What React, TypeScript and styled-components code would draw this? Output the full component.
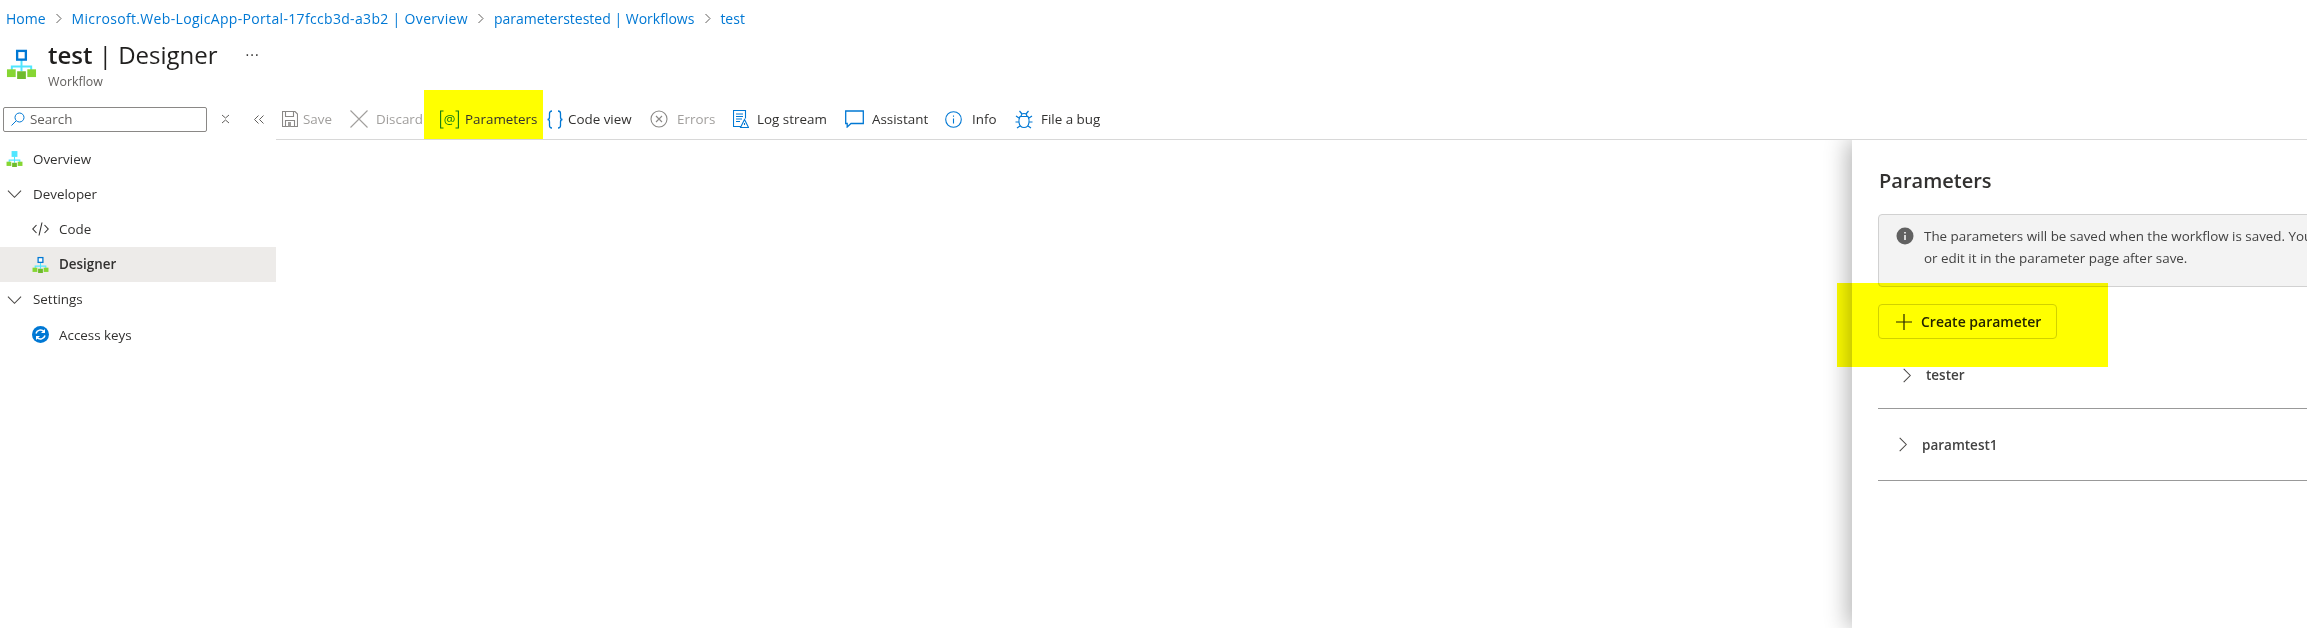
import React from "react";
import styled, { createGlobalStyle } from "styled-components";

const GlobalStyle = createGlobalStyle`
    html, body {
        margin: 0;
        background: #fff;
        overflow: hidden;
    }
    body {
        font-family: "Open Sans", "Noto Sans", sans-serif;
        font-size: 13.4px;
        color: #323130;
    }
`;

const Page = styled.div`
    position: relative;
    width: 2307px;
    height: 628px;
    overflow: hidden;
`;

/* Breadcrumb */
const Breadcrumb = styled.nav`
    display: flex;
    align-items: center;
    height: 38px;
    padding: 0 0 1px 6px;
    box-sizing: border-box;
    color: #0078d4;
    font-size: 14px;
`;
const Crumb = styled.span<{ $spread?: boolean }>`
    letter-spacing: ${({ $spread }) => ($spread ? "0.33px" : "0")};
`;
const CrumbSep = styled.span`
    display: inline-flex;
    width: 26px;
    justify-content: center;
    color: #605e5c;
`;

/* Title */
const Header = styled.header`
    display: flex;
    height: 52px;
    padding-left: 6px;
    box-sizing: border-box;
`;
const HeaderIcon = styled.div`
    margin-top: 10px;
`;
const TitleBlock = styled.div`
    margin-left: 11px;
`;
const TitleRow = styled.div`
    display: flex;
    align-items: center;
    height: 32px;
`;
const Title = styled.h1`
    margin: 0;
    font-size: 24px;
    font-weight: 400;
    color: #201f1e;
    b {
        font-weight: 600;
    }
`;
const Ellipsis = styled.span`
    margin-left: 28px;
    font-size: 14px;
    color: #323130;
    letter-spacing: 1px;
`;
const Subtitle = styled.div`
    margin-top: 3px;
    font-size: 12.4px;
    color: #605e5c;
`;

/* Body */
const Body = styled.div`
    display: grid;
    grid-template-columns: 276px 1fr;
`;
const Sidebar = styled.aside`
    display: flex;
    flex-direction: column;
`;
const SearchRow = styled.div`
    display: flex;
    align-items: center;
    height: 49px;
    padding: 9px 0 0 3px;
    box-sizing: border-box;
`;
const SearchBox = styled.div`
    display: flex;
    align-items: center;
    gap: 5px;
    width: 204px;
    height: 25px;
    padding-left: 7px;
    box-sizing: border-box;
    border: 1px solid #8a8886;
    border-radius: 2px;
    color: #605e5c;
`;
const SideGlyph = styled.span<{ $left: number }>`
    display: inline-flex;
    margin-left: ${({ $left }) => $left}px;
    color: #605e5c;
`;
const NavList = styled.div`
    margin-top: 2px;
`;
const NavRow = styled.div<{ $indent: number; $active?: boolean }>`
    display: flex;
    align-items: center;
    gap: 10px;
    height: 35.2px;
    padding-left: ${({ $indent }) => $indent}px;
    box-sizing: border-box;
    background: ${({ $active }) => ($active ? "#edebe9" : "transparent")};
    font-weight: ${({ $active }) => ($active ? 600 : 400)};
`;
const NavIcon = styled.span`
    display: inline-flex;
    width: 17px;
    height: 17px;
    align-items: center;
    justify-content: center;
    flex: none;
`;

/* Toolbar */
const Toolbar = styled.div`
    display: flex;
    align-items: stretch;
    height: 50px;
    padding-left: 6px;
    box-sizing: border-box;
    border-bottom: 1px solid #d8d8d8;
`;
const ToolButton = styled.div<{ $width: number; $muted?: boolean; $highlight?: boolean }>`
    display: flex;
    align-items: center;
    flex: none;
    width: ${({ $width }) => $width}px;
    padding: 9px 0 0 ${({ $highlight }) => ($highlight ? 16 : 0)}px;
    box-sizing: border-box;
    margin-right: ${({ $highlight }) => ($highlight ? 4 : 0)}px;
    background: ${({ $highlight }) => ($highlight ? "#ffff00" : "transparent")};
    color: ${({ $muted }) => ($muted ? "#a19f9d" : "#323130")};
    white-space: nowrap;
`;
const ToolIcon = styled.span<{ $slot: number }>`
    display: inline-flex;
    flex: none;
    width: ${({ $slot }) => $slot}px;
`;

/* Parameters panel; the clip keeps its shadow below the toolbar line */
const PanelClip = styled.div`
    position: absolute;
    top: 140px;
    left: 1700px;
    right: 0;
    bottom: 0;
    overflow: hidden;
`;
const Panel = styled.section`
    height: 100%;
    margin-left: 152px;
    padding: 28px 0 0 26px;
    box-sizing: border-box;
    background: #fff;
    box-shadow: -4px 0 22px rgba(0, 0, 0, 0.3);
`;
const PanelTitle = styled.h2`
    margin: 0;
    padding-left: 1px;
    font-size: 20px;
    font-weight: 600;
    line-height: 26px;
    color: #323130;
`;
const InfoBar = styled.div`
    display: flex;
    gap: 10px;
    width: 600px;
    height: 73px;
    margin-top: 20px;
    padding: 10px 0 0 17px;
    box-sizing: border-box;
    background: #f3f3f3;
    border: 1px solid #d1d1d1;
    border-radius: 4px;
    line-height: 22px;
    white-space: nowrap;
    color: #424242;
`;
const InfoGlyph = styled.svg`
    flex: none;
    margin-top: 2px;
`;
const CreateButton = styled.div`
    display: flex;
    align-items: center;
    gap: 9px;
    width: 179px;
    height: 35px;
    margin-top: 17px;
    padding-left: 17px;
    box-sizing: border-box;
    border: 1px solid #d1d1d1;
    border-radius: 4px;
    font-size: 14px;
    font-weight: 600;
    color: #242424;
`;
const ParamList = styled.div`
    margin-top: 15px;
`;
const ParamRow = styled.div<{ $offset: number; $height: number; $lift?: number }>`
    display: flex;
    align-items: center;
    gap: 12px;
    height: ${({ $height }) => $height}px;
    padding: 0 0 ${({ $lift }) => $lift ?? 0}px ${({ $offset }) => $offset}px;
    box-sizing: content-box;
    border-bottom: 1px solid #999;
    font-size: 13.5px;
    font-weight: 600;
    color: #424242;
`;

/* Annotation painted over the screenshot */
const Marker = styled.div`
    position: absolute;
    left: 1837px;
    top: 283px;
    width: 271px;
    height: 84px;
    background: #ffff00;
    mix-blend-mode: multiply;
    pointer-events: none;
`;

const Workflow: React.FC<{ size: number; plain?: boolean }> = ({ size, plain }) => (
    <svg width={size} height={size} viewBox="0 0 32 32">
        <path d="M16 12v9M6 24v-5h20v5M16 19v5" fill="none" stroke="#50e6ff" strokeWidth="2" />
        {plain
            ? <rect x="10.5" y="2" width="11" height="11" fill="#50e6ff" />
            : <rect x="11.5" y="3" width="9" height="9" fill="#fff" stroke="#0078d4" strokeWidth="2.4" />}
        <rect x="1" y="22" width="9" height="8" fill="#86d633" />
        <rect x="11.5" y="24" width="9" height="8" fill="#6fbb2c" />
        <rect x="22" y="22" width="9" height="8" fill="#86d633" />
    </svg>
);

const Chevron: React.FC<{ dir: "down" | "right" }> = ({ dir }) => (
    <svg width="15" height="15" viewBox="0 0 16 16" fill="none" stroke="#484644" strokeWidth="1.1">
        <path d={dir === "down" ? "M1 5l7 7 7-7" : "M5 1l7 7-7 7"} />
    </svg>
);

const Sep = () => (
    <CrumbSep>
        <svg width="9" height="11" viewBox="0 0 9 11" fill="none" stroke="#605e5c">
            <path d="M2.5 1l4.5 4.5-4.5 4.5" />
        </svg>
    </CrumbSep>
);

const SaveIcon = () => (
    <svg width="16" height="16" viewBox="0 0 16 16" fill="none" stroke="#8a8886" strokeWidth="1.1">
        <path d="M.5.5h12.5l2.5 2.5v12.5h-15z" />
        <path d="M3.5.5v5h8v-5M3.5 15.500v-6h9v6" />
        <path d="M6 11h3v4.500H6z" fill="#a19f9d" stroke="none" />
    </svg>
);
const DiscardIcon = () => (
    <svg width="18" height="18" viewBox="0 0 18 18" fill="none" stroke="#a19f9d" strokeWidth="1.1">
        <path d="M.5.5l17 17M17.500.5l-17 17" />
    </svg>
);
const ParamsIcon = () => (
    <svg width="19" height="19" viewBox="0 0 19 19" fill="none">
        <path d="M3.500 1H.6v17h2.900M15.500 1h2.900v17h-2.900" stroke="#107c10" strokeWidth="1.1" />
        <text x="9.500" y="13.500" textAnchor="middle" fontSize="13" fill="#107c10" fontFamily="Open Sans, sans-serif">@</text>
    </svg>
);
const BracesIcon = () => (
    <svg width="16" height="19" viewBox="0 0 16 19" fill="none" stroke="#0078d4" strokeWidth="1.3">
        <path d="M5 1Q2.500 1 2.500 3.500v3.500q0 2.500-2 2.500 2 0 2 2.500v3.500Q2.500 18 5 18M11 1q2.500 0 2.500 2.500v3.500q0 2.500 2 2.500-2 0-2 2.500v3.500q0 2.500-2.500 2.500" />
    </svg>
);
const ErrorsIcon = () => (
    <svg width="18" height="18" viewBox="0 0 18 18" fill="none" stroke="#8a8886" strokeWidth="1.1">
        <circle cx="9" cy="9" r="8" />
        <path d="M6 6l6 6M12 6l-6 6" />
    </svg>
);
const LogIcon = () => (
    <svg width="16" height="18" viewBox="0 0 16 18" fill="none" stroke="#0078d4" strokeWidth="1.1">
        <path d="M8 16.500H.5V.5h12v8" />
        <path d="M3 4h7M3 6.500h7M3 9h6M3 11.500h4" />
        <path d="M11.500 9.500l4 8h-8zM11.500 13v2" />
    </svg>
);
const AssistantIcon = () => (
    <svg width="19" height="18" viewBox="0 0 19 18" fill="none" stroke="#0078d4" strokeWidth="1.3">
        <path d="M.7 1h17.600v12.500H6l-3.800 3.500v-3.500H.7z" />
    </svg>
);
const InfoIcon = () => (
    <svg width="17" height="17" viewBox="0 0 17 17" fill="none" stroke="#0078d4" strokeWidth="1.1">
        <circle cx="8.500" cy="8.500" r="7.800" />
        <path d="M8.500 7.500v5M8.500 4.500v1.300" />
    </svg>
);
const BugIcon = () => (
    <svg width="18" height="19" viewBox="0 0 18 19" fill="none" stroke="#0078d4" strokeWidth="1.200">
        <path d="M5 6.500h8q1.500 3 1 6-.8 5-5 5t-5-5q-.5-3 1-6z" />
        <path d="M6 6.500a3 3 0 0 1 6 0M4.500 1l2.500 3M13.500 1L11 4M4 8L1 6M14 8l3-2M3.800 12H.5M14.200 12h3.300M5 16l-3 2M13 16l3 2" />
    </svg>
);
const SyncIcon = () => (
    <svg width="17" height="17" viewBox="0 0 17 17">
        <circle cx="8.500" cy="8.500" r="8.500" fill="#0078d4" />
        <path d="M4 7.500A4.700 4.700 0 0 1 12 5.500M13 9.500A4.700 4.700 0 0 1 5 11.500" fill="none" stroke="#fff" strokeWidth="1.500" />
        <path d="M13 3v4h-4zM4 14v-4h4z" fill="#fff" />
    </svg>
);

const tools = [
    { label: "Save", icon: <SaveIcon />, slot: 21, width: 68, muted: true },
    { label: "Discard", icon: <DiscardIcon />, slot: 26, width: 74, muted: true },
    { label: "Parameters", icon: <ParamsIcon />, slot: 25, width: 119, highlight: true },
    { label: "Code view", icon: <BracesIcon />, slot: 21, width: 103 },
    { label: "Errors", icon: <ErrorsIcon />, slot: 27, width: 83, muted: true },
    { label: "Log stream", icon: <LogIcon />, slot: 24, width: 112 },
    { label: "Assistant", icon: <AssistantIcon />, slot: 27, width: 100 },
    { label: "Info", icon: <InfoIcon />, slot: 27, width: 70 },
    { label: "File a bug", icon: <BugIcon />, slot: 26, width: 100 },
];

const App: React.FC = () => (
    <Page>
        <GlobalStyle />
        <Breadcrumb>
            <Crumb>Home</Crumb><Sep />
            <Crumb $spread>Microsoft.Web-LogicApp-Portal-17fccb3d-a3b2 | Overview</Crumb><Sep />
            <Crumb>parameterstested | Workflows</Crumb><Sep />
            <Crumb>test</Crumb>
        </Breadcrumb>
        <Header>
            <HeaderIcon><Workflow size={31} /></HeaderIcon>
            <TitleBlock>
                <TitleRow>
                    <Title><b>test</b> | Designer</Title>
                    <Ellipsis>···</Ellipsis>
                </TitleRow>
                <Subtitle>Workflow</Subtitle>
            </TitleBlock>
        </Header>
        <Body>
            <Sidebar>
                <SearchRow>
                    <SearchBox>
                        <svg width="14" height="14" viewBox="0 0 14 14" fill="none" stroke="#0078d4">
                            <circle cx="8.500" cy="5.500" r="4.500" />
                            <path d="M5 9l-4.500 4.500" />
                        </svg>
                        Search
                    </SearchBox>
                    <SideGlyph $left={14}>
                        <svg width="9" height="10" viewBox="0 0 9 10" fill="none" stroke="#605e5c">
                            <path d="M1 1l3.500 3L8 1M1 9l3.500-3L8 9" />
                        </svg>
                    </SideGlyph>
                    <SideGlyph $left={24}>
                        <svg width="10" height="9" viewBox="0 0 10 9" fill="none" stroke="#605e5c">
                            <path d="M4.500.5l-4 4 4 4M9.500.5l-4 4 4 4" />
                        </svg>
                    </SideGlyph>
                </SearchRow>
                <NavList>
                    <NavRow $indent={6}><NavIcon><Workflow size={17} plain /></NavIcon>Overview</NavRow>
                    <NavRow $indent={6}><NavIcon><Chevron dir="down" /></NavIcon>Developer</NavRow>
                    <NavRow $indent={32}>
                        <NavIcon>
                            <svg width="17" height="14" viewBox="0 0 17 14" fill="none" stroke="#323130" strokeWidth="1.1">
                                <path d="M4.500 3L.8 7l3.700 4M12.500 3l3.700 4-3.700 4M10 .5L7 13.500" />
                            </svg>
                        </NavIcon>
                        Code
                    </NavRow>
                    <NavRow $indent={32} $active><NavIcon><Workflow size={17} /></NavIcon>Designer</NavRow>
                    <NavRow $indent={6}><NavIcon><Chevron dir="down" /></NavIcon>Settings</NavRow>
                    <NavRow $indent={32}><NavIcon><SyncIcon /></NavIcon>Access keys</NavRow>
                </NavList>
            </Sidebar>
            <Toolbar>
                {tools.map((t) => (
                    <ToolButton key={t.label} $width={t.width} $muted={t.muted} $highlight={t.highlight}>
                        <ToolIcon $slot={t.slot}>{t.icon}</ToolIcon>
                        {t.label}
                    </ToolButton>
                ))}
            </Toolbar>
        </Body>
        <PanelClip>
            <Panel>
                <PanelTitle>Parameters</PanelTitle>
                <InfoBar>
                    <InfoGlyph width="18" height="18" viewBox="0 0 18 18">
                        <circle cx="9" cy="9" r="8.500" fill="#616161" />
                        <path d="M9 8v5M9 5v1.500" stroke="#fff" strokeWidth="1.500" />
                    </InfoGlyph>
                    <span>
                        The parameters will be saved when the workflow is saved. You can edit it here<br />
                        or edit it in the parameter page after save.
                    </span>
                </InfoBar>
                <CreateButton>
                    <svg width="16" height="16" viewBox="0 0 16 16" stroke="#242424" strokeWidth="1.200">
                        <path d="M8 0v16M0 8h16" />
                    </svg>
                    Create parameter
                </CreateButton>
                <ParamList>
                    <ParamRow $offset={21} $height={42} $lift={12}><Chevron dir="right" />tester</ParamRow>
                    <ParamRow $offset={17} $height={71}><Chevron dir="right" />paramtest1</ParamRow>
                </ParamList>
            </Panel>
        </PanelClip>
        <Marker />
    </Page>
);

export default App;
